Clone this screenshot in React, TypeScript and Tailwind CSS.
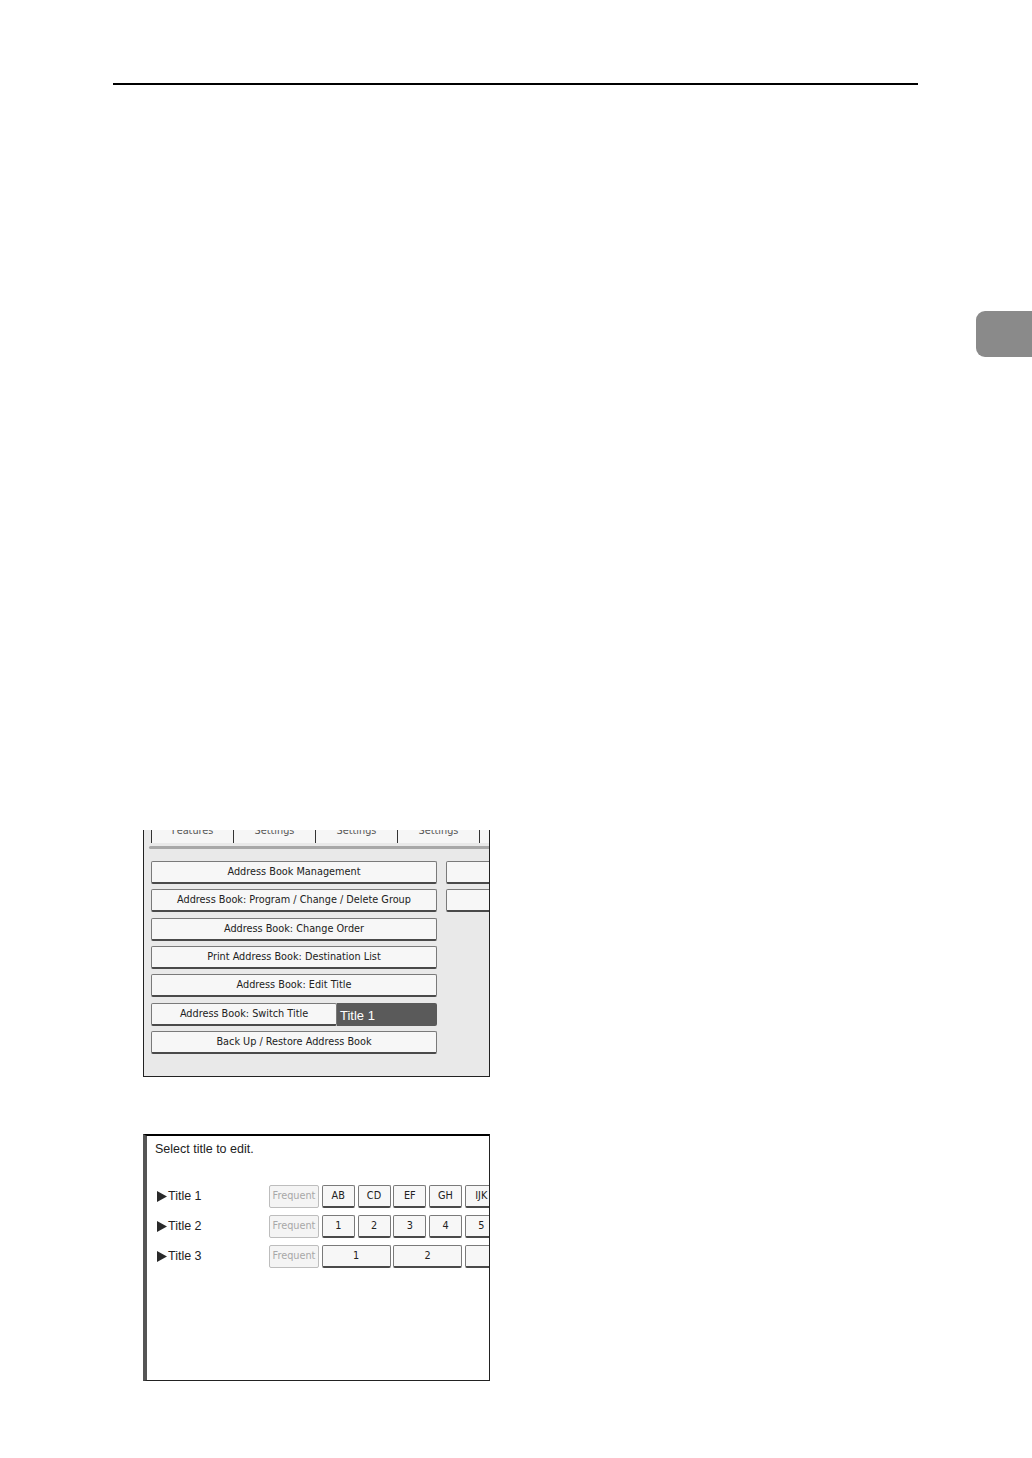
const font = { fontFamily: '"Liberation Sans", Arial, sans-serif' };
const narrow = { fontFamily: '"DejaVu Sans Condensed", "Liberation Sans", sans-serif' };

const tabs = ['Features', 'Settings', 'Settings', 'Settings'];

const menu = [
  'Address Book Management',
  'Address Book: Program / Change / Delete Group',
  'Address Book: Change Order',
  'Print Address Book: Destination List',
  'Address Book: Edit Title',
];

function Key({ label, className = '' }: { label: string; className?: string }) {
  return (
    <div
      className={`flex h-[23px] shrink-0 items-center justify-center rounded-[2px] border border-[#7a7a7a] border-b-2 border-b-[#4a4a4a] bg-[#f7f7f7] text-[10.8px] text-[#222] ${className}`}
      style={narrow}
    >
      {label}
    </div>
  );
}

function SettingsPanel() {
  return (
    <div className="ml-[143px] mt-[473px] flex h-[247px] w-[347px] flex-col overflow-hidden border-x border-b border-[#222] bg-[#e9e9e9]">
      <div className="flex h-[13px] shrink-0 overflow-hidden pl-[7px]">
        {tabs.map((t, i) => (
          <div
            key={i}
            className="flex w-[82px] shrink-0 justify-center overflow-hidden border-l border-[#333] bg-[#f6f6f6]"
          >
            <span className="-mt-[6px] text-[10.8px] leading-[14px] text-[#555]" style={narrow}>
              {t}
            </span>
          </div>
        ))}
        <div className="w-[30px] shrink-0 border-l border-[#333] bg-[#f6f6f6]" />
      </div>
      <div className="ml-[5px] mt-[3px] h-[3px] shrink-0 rounded-l-full bg-[#a8a8a8]" />
      <div className="flex pl-[7px] pt-[12px]">
        <div className="flex w-[286px] shrink-0 flex-col gap-[5.33px]">
          {menu.map((m) => (
            <Key key={m} label={m} />
          ))}
          <div className="flex h-[23px] shrink-0">
            <Key label="Address Book: Switch Title" className="w-[186px]" />
            <div className="flex flex-1 items-center rounded-r-[2px] bg-[#5a5a5a] pl-[3px] pt-[3px] text-[13px] text-white">
              Title 1
            </div>
          </div>
          <Key label="Back Up / Restore Address Book" />
        </div>
        <div className="ml-[9px] flex flex-col gap-[5.33px]">
          <Key label="" className="w-[60px]" />
          <Key label="" className="w-[60px]" />
        </div>
      </div>
    </div>
  );
}

function Arrow() {
  return (
    <svg width="10" height="11" viewBox="0 0 10 11" className="mr-[1px] shrink-0">
      <path d="M0 0 L10 5.5 L0 11 Z" fill="#2a2a2a" />
    </svg>
  );
}

function TitleRow({ name, keys, wide }: { name: string; keys: string[]; wide?: boolean }) {
  return (
    <div className="flex h-[23px] items-center">
      <div className="flex w-[114px] shrink-0 items-center pl-[2px] text-[12.5px] text-[#222]">
        <Arrow />
        {name}
      </div>
      <div className="flex gap-[2.75px]">
        <div
          className="flex h-[23px] w-[50px] shrink-0 items-center justify-center rounded-[2px] border border-[#bdbdbd] bg-[#f4f4f4] text-[10.8px] text-[#a8a8a8]"
          style={narrow}
        >
          Frequent
        </div>
        {keys.map((k, i) => (
          <Key key={i} label={k} className={wide ? 'w-[68.75px]' : 'w-[33px]'} />
        ))}
      </div>
    </div>
  );
}

function TitlePanel() {
  return (
    <div className="ml-[143px] mt-[57px] flex h-[247px] w-[347px] flex-col overflow-hidden border-t-2 border-l-4 border-r border-b border-[#222] border-t-black border-l-[#555] bg-white pl-[8px]">
      <div className="pt-[5px] text-[12.5px] leading-[16px] text-[#222]">Select title to edit.</div>
      <div className="mt-[28px] flex flex-col gap-[7px]">
        <TitleRow name="Title 1" keys={['AB', 'CD', 'EF', 'GH', 'IJK']} />
        <TitleRow name="Title 2" keys={['1', '2', '3', '4', '5']} />
        <TitleRow name="Title 3" keys={['1', '2', '']} wide />
      </div>
    </div>
  );
}

export default function App() {
  return (
    <div className="flex h-[1458px] w-[1032px] flex-col bg-white" style={font}>
      <div className="ml-[113px] mt-[83px] h-[2px] w-[805px] shrink-0 bg-black" />
      <div className="mt-[226px] h-[46px] w-[56px] shrink-0 self-end rounded-l-[9px] bg-[#8a8a8a]" />
      <SettingsPanel />
      <TitlePanel />
    </div>
  );
}
